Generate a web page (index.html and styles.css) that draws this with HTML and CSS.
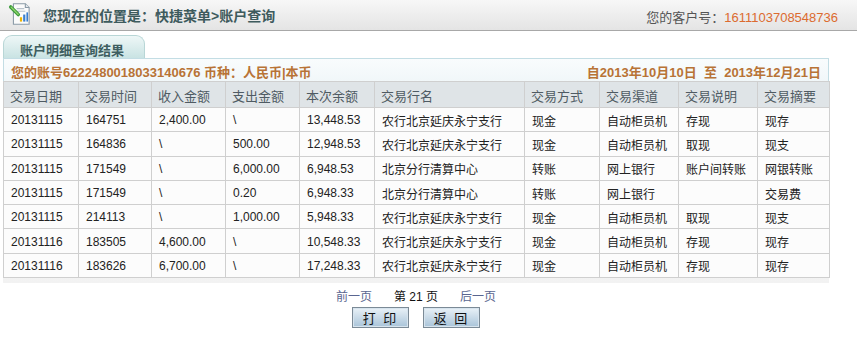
FILE: index.html
```html
<!DOCTYPE html>
<html lang="zh-CN">
<head>
<meta charset="utf-8">
<title>账户查询</title>
<link rel="stylesheet" href="styles.css">
</head>
<body>
<div class="topbar">
  <div class="crumb">
    <svg class="icon" width="26" height="26" viewBox="0 0 24 24">
      <path d="M5 2.5h11l3.5 3.5v15.5h-14.5z" fill="#fbfbfb" stroke="#8a9aa6" stroke-width="1"/>
      <path d="M16 2.5v3.5h3.5" fill="#e4e8ec" stroke="#8a9aa6" stroke-width="1"/>
      <path d="M8 7h7M8 9.5h8" stroke="#b9c3cc" stroke-width="1"/>
      <rect x="11" y="15" width="2" height="4" fill="#f0b400"/>
      <rect x="14" y="12.5" width="2" height="6.5" fill="#3a7fd0"/>
      <rect x="17" y="10.5" width="1.5" height="8.5" fill="#3a7fd0"/>
      <path d="M2.5 5.5l7 7" stroke="#3b9a3b" stroke-width="3.2" stroke-linecap="round"/>
      <path d="M3 5.8l6.4 6.4" stroke="#8fd46a" stroke-width="1.2" stroke-linecap="round"/>
    </svg>
    <span class="crumb-text">您现在的位置是：快捷菜单&gt;账户查询</span>
  </div>
  <div class="custno">您的客户号：<span class="num">1611103708548736</span></div>
</div>

<div class="wrap">
  <div class="tab">账户明细查询结果</div>
  <div class="panel">
    <div class="info">
      <span>您的账号6222480018033140676 币种：人民币|本币</span>
      <span>自2013年10月10日&nbsp; 至&nbsp; 2013年12月21日</span>
    </div>
    <table class="grid">
      <colgroup>
        <col style="width:75px"><col style="width:73px"><col style="width:74px"><col style="width:74px"><col style="width:75px">
        <col style="width:150px"><col style="width:75px"><col style="width:79px"><col style="width:79px"><col style="width:72px">
      </colgroup>
      <thead>
        <tr><th>交易日期</th><th>交易时间</th><th>收入金额</th><th>支出金额</th><th>本次余额</th><th>交易行名</th><th>交易方式</th><th>交易渠道</th><th>交易说明</th><th>交易摘要</th></tr>
      </thead>
      <tbody>
        <tr><td>20131115</td><td>164751</td><td>2,400.00</td><td>\</td><td>13,448.53</td><td>农行北京延庆永宁支行</td><td>现金</td><td>自动柜员机</td><td>存现</td><td>现存</td></tr>
        <tr><td>20131115</td><td>164836</td><td>\</td><td>500.00</td><td>12,948.53</td><td>农行北京延庆永宁支行</td><td>现金</td><td>自动柜员机</td><td>取现</td><td>现支</td></tr>
        <tr><td>20131115</td><td>171549</td><td>\</td><td>6,000.00</td><td>6,948.53</td><td>北京分行清算中心</td><td>转账</td><td>网上银行</td><td>账户间转账</td><td>网银转账</td></tr>
        <tr><td>20131115</td><td>171549</td><td>\</td><td>0.20</td><td>6,948.33</td><td>北京分行清算中心</td><td>转账</td><td>网上银行</td><td></td><td>交易费</td></tr>
        <tr><td>20131115</td><td>214113</td><td>\</td><td>1,000.00</td><td>5,948.33</td><td>农行北京延庆永宁支行</td><td>现金</td><td>自动柜员机</td><td>取现</td><td>现支</td></tr>
        <tr><td>20131116</td><td>183505</td><td>4,600.00</td><td>\</td><td>10,548.33</td><td>农行北京延庆永宁支行</td><td>现金</td><td>自动柜员机</td><td>存现</td><td>现存</td></tr>
        <tr><td>20131116</td><td>183626</td><td>6,700.00</td><td>\</td><td>17,248.33</td><td>农行北京延庆永宁支行</td><td>现金</td><td>自动柜员机</td><td>存现</td><td>现存</td></tr>
      </tbody>
    </table>
  </div>
  <div class="pager">
    <a class="plink" href="#">前一页</a>
    <span class="cur">第 21 页</span>
    <a class="plink" href="#">后一页</a>
  </div>
  <div class="btns">
    <button class="btn" type="button">打 印</button>
    <button class="btn" type="button">返 回</button>
  </div>
</div>
</body>
</html>
```

FILE: styles.css
```css
* { box-sizing: border-box; }
body {
  margin: 0;
  background: #fff;
  font-family: "Liberation Sans", "Noto Sans CJK SC", sans-serif;
  font-size: 12px;
  color: #222;
}
.topbar {
  height: 31px;
  display: flex;
  align-items: center;
  justify-content: space-between;
  padding: 0 19px 0 8px;
  background: linear-gradient(#f7f7f7, #e4e4e4);
  border-bottom: 1px solid #a8a8a8;
}
.crumb { display: flex; align-items: center; gap: 9px; }
.icon { display: block; margin-top: -3px; }
.crumb-text {
  font-size: 14px;
  font-weight: bold;
  color: #3e5b5d;
}
.custno { font-size: 13px; color: #555; padding-top: 2px; }
.custno .num { color: #dc6b2f; }

.wrap { width: 826px; margin: 4px 0 0 3px; }
.tab {
  width: 142px;
  height: 23px;
  padding: 4px 0 0 16px;
  font-size: 13px;
  font-weight: bold;
  color: #3e5e60;
  background: linear-gradient(#eef7f7, #c9e3e3);
  border: 1px solid #b8d6d6;
  border-bottom: none;
  border-radius: 9px 9px 0 0;
}
.panel {
  border-top: 1px solid #c3dde4;
  background: linear-gradient(#ffffff, #f2f2f2);
  padding-bottom: 5px;
}
.info {
  display: flex;
  justify-content: space-between;
  height: 22px;
  padding: 3px 7px 0 7px;
  font-size: 13px;
  font-weight: bold;
  color: #b87336;
  border-left: 1px solid #c3dde4;
  border-right: 1px solid #c3dde4;
  background: linear-gradient(#f9fcfd, #f1f7f9);
}
.grid {
  width: 826px;
  table-layout: fixed;
  border-collapse: collapse;
  background: #fcfcfc;
}
.grid th, .grid td {
  border: 1px solid #cfcfcf;
  text-align: left;
  white-space: nowrap;
  overflow: hidden;
}
.grid th {
  height: 26px;
  padding: 1px 6px 0;
  background: #dfe4e7;
  font-size: 13px;
  font-weight: normal;
  color: #4f5b63;
}
.grid td {
  height: 24.3px;
  padding: 1px 7px 0;
  font-size: 12px;
  color: #222;
}
.pager {
  display: flex;
  justify-content: center;
  gap: 22px;
  margin-top: 4px;
  height: 18px;
  font-size: 12px;
}
.plink { color: #5a6690; text-decoration: none; }
.cur { color: #111; }
.btns {
  display: flex;
  justify-content: center;
  gap: 14px;
  margin-top: 2px;
}
.btn {
  width: 57px;
  height: 21px;
  padding: 0;
  font-family: "Liberation Sans", "Noto Sans CJK SC", sans-serif;
  font-size: 13px;
  letter-spacing: 2px;
  color: #111;
  background: linear-gradient(#e9f1f7, #a9c4d9);
  border: 1px solid #7b8a96;
  box-shadow: inset 0 0 0 1px #d7e4ee;
}
```
